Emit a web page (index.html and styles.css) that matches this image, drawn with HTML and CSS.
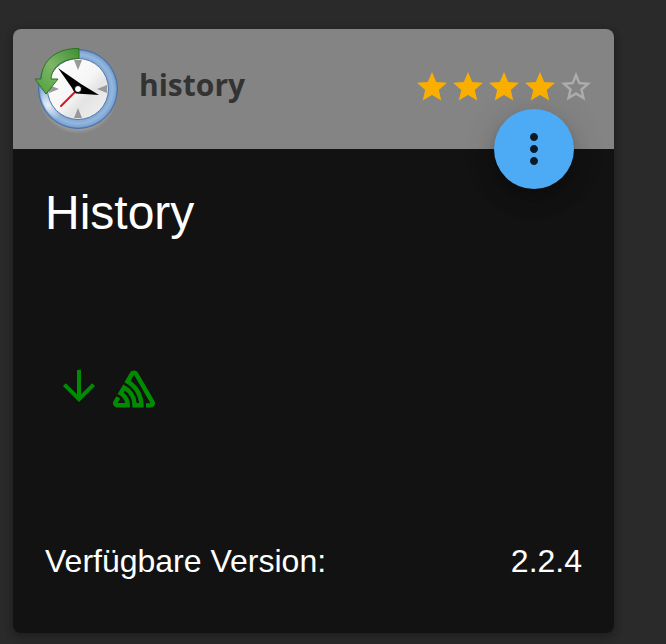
FILE: index.html
```html
<!DOCTYPE html>
<html lang="de">
<head>
<meta charset="utf-8">
<meta name="viewport" content="width=device-width, initial-scale=1">
<title>History</title>
<link rel="stylesheet" href="styles.css">
</head>
<body>
<article class="card">
  <header class="card-header">
    <svg class="logo" viewBox="0 0 92 92" aria-hidden="true">
      <defs>
        <radialGradient id="ring" cx="47" cy="46" r="40" gradientUnits="userSpaceOnUse">
          <stop offset=".76" stop-color="#7fa6d2"/>
          <stop offset=".86" stop-color="#94b7de"/>
          <stop offset=".94" stop-color="#7fa5d2"/>
          <stop offset="1" stop-color="#5078b0"/>
        </radialGradient>
        <radialGradient id="shine" cx="17" cy="62" r="17" gradientUnits="userSpaceOnUse">
          <stop offset="0" stop-color="#fff" stop-opacity=".8"/>
          <stop offset="1" stop-color="#fff" stop-opacity="0"/>
        </radialGradient>
        <linearGradient id="face" x1="0" y1="0" x2="1" y2="1">
          <stop offset="0" stop-color="#fff"/>
          <stop offset=".5" stop-color="#f6f6f6"/>
          <stop offset=".65" stop-color="#e4e4e4"/>
          <stop offset="1" stop-color="#f2f2f2"/>
        </linearGradient>
        <linearGradient id="arrow" x1="1" y1="0" x2="0" y2="1">
          <stop offset="0" stop-color="#3f8f33"/>
          <stop offset=".5" stop-color="#7db667"/>
          <stop offset="1" stop-color="#4d9e36"/>
        </linearGradient>
        <radialGradient id="glow">
          <stop offset=".84" stop-color="#a4a4a4"/>
          <stop offset="1" stop-color="#a4a4a4" stop-opacity="0"/>
        </radialGradient>
      </defs>
      <ellipse cx="47" cy="50" rx="40" ry="41" fill="url(#glow)"/>
      <circle cx="47" cy="46" r="39.500" fill="url(#ring)" stroke="#476fa8"/>
      <circle cx="47" cy="46" r="38" fill="url(#shine)"/>
      <circle cx="47" cy="46" r="30.500" fill="url(#face)" stroke="#5577a8"/>
      <path fill="#999" d="M43 17h8l-4 10zM43 75h8l-4-10zM18 42v8l10-4zM76 42v8l-10-4z"/>
      <path d="M47 46 30 63" stroke="#d9141c" stroke-width="2" stroke-linecap="round"/>
      <path d="M27 25 50 41 68 52 45 50.500Q42 48 41 45z" fill="#000"/>
      <circle cx="47" cy="46" r="3.500" fill="#fff" stroke="#000"/>
      <path d="M48 5.500v10C33 15.500 21 23 20 36h7L15 51 4 36h6C11 16 27 5 48 5.500z" fill="url(#arrow)" stroke="#2c721f" stroke-linejoin="round"/>
    </svg>
    <span class="name">history</span>
    <div class="rating" role="img" aria-label="4 von 5 Sternen">
      <svg class="star" viewBox="0 0 24 24"><path d="M12 17.270 18.180 21l-1.640-7.030L22 9.240l-7.190-.610L12 2 9.190 8.630 2 9.240l5.460 4.730L5.820 21z"/></svg>
      <svg class="star" viewBox="0 0 24 24"><path d="M12 17.270 18.180 21l-1.640-7.030L22 9.240l-7.190-.610L12 2 9.190 8.630 2 9.240l5.460 4.730L5.820 21z"/></svg>
      <svg class="star" viewBox="0 0 24 24"><path d="M12 17.270 18.180 21l-1.640-7.030L22 9.240l-7.190-.610L12 2 9.190 8.630 2 9.240l5.460 4.730L5.820 21z"/></svg>
      <svg class="star" viewBox="0 0 24 24"><path d="M12 17.270 18.180 21l-1.640-7.030L22 9.240l-7.190-.610L12 2 9.190 8.630 2 9.240l5.460 4.730L5.820 21z"/></svg>
      <svg class="star star-empty" viewBox="0 0 24 24"><path d="m22 9.240-7.190-.62L12 2 9.190 8.630 2 9.240l5.460 4.730L5.820 21 12 17.270 18.180 21l-1.630-7.030L22 9.240zM12 15.400l-3.760 2.270 1-4.280-3.320-2.880 4.380-.38L12 6.100l1.710 4.040 4.380.38-3.320 2.880 1 4.280L12 15.400z"/></svg>
    </div>
    <button class="menu-button" type="button" aria-label="Menü">
      <svg class="icon" viewBox="0 0 24 24"><path d="M12 8c1.100 0 2-.9 2-2s-.9-2-2-2-2 .9-2 2 .9 2 2 2zm0 2c-1.100 0-2 .9-2 2s.9 2 2 2 2-.9 2-2-.9-2-2-2zm0 6c-1.100 0-2 .9-2 2s.9 2 2 2 2-.9 2-2-.9-2-2-2z"/></svg>
    </button>
  </header>
  <div class="card-body">
    <h1 class="title">History</h1>
    <div class="status">
      <svg class="icon" viewBox="0 0 24 24" aria-hidden="true"><path d="m20 12-1.410-1.410L13 16.170V4h-2v12.170l-5.580-5.590L4 12l8 8 8-8z"/></svg>
      <svg class="sentry" viewBox="-.4 -.4 24.8 24.8" aria-hidden="true"><path d="M13.910 2.505c-.873-1.448-2.972-1.448-3.844 0L6.904 7.920a15.478 15.478 0 0 1 8.530 12.811h-2.221A13.301 13.301 0 0 0 5.784 9.814l-2.926 5.060a7.650 7.650 0 0 1 4.435 5.848H2.194a.365.365 0 0 1-.298-.534l1.413-2.402a5.160 5.160 0 0 0-1.614-.913L.296 19.275a2.182 2.182 0 0 0 .812 2.999 2.240 2.240 0 0 0 1.086.288h6.983a9.322 9.322 0 0 0-3.845-8.318l1.110-1.922a11.470 11.470 0 0 1 4.950 10.240h5.915a17.242 17.242 0 0 0-7.885-15.280l2.244-3.845a.37.37 0 0 1 .504-.13c.255.14 9.750 16.708 9.928 16.900a.365.365 0 0 1-.327.543h-2.287c.029.612.029 1.223 0 1.831h2.297a2.206 2.206 0 0 0 1.922-3.310z"/></svg>
    </div>
    <div class="version">
      <span>Verfügbare Version:</span>
      <span>2.2.4</span>
    </div>
  </div>
</article>
</body>
</html>
```
FILE: styles.css
```css
* {
  box-sizing: border-box;
}

body {
  margin: 0;
  padding: 29px 52px 11px 13px;
  background: #2a2a2a;
  color: #fff;
  font-family: "Liberation Sans", Arial, sans-serif;
}

.card {
  border-radius: 8px;
  background: #121212;
  box-shadow: 0 4px 8px rgba(0, 0, 0, .2), 0 2px 10px rgba(0, 0, 0, .16);
}

.card-header {
  position: relative;
  display: flex;
  align-items: center;
  height: 120px;
  padding: 0 20px 0 18px;
  border-radius: 8px 8px 0 0;
  background: #848484;
}

.logo {
  width: 92px;
  height: 92px;
}

.name {
  margin-left: 16px;
  padding-bottom: 8px;
  color: #333;
  font: 700 30px/40px "Open Sans", "Segoe UI", sans-serif;
}

.rating {
  display: flex;
  margin-left: auto;
  padding-bottom: 4px;
}

.star {
  width: 36px;
  height: 36px;
  fill: #faaf00;
}

.star-empty {
  fill: #adadad;
}

.menu-button {
  position: absolute;
  right: 40px;
  bottom: -40px;
  display: grid;
  place-items: center;
  width: 80px;
  height: 80px;
  padding: 0;
  border: 0;
  border-radius: 50%;
  background: #4dabf5;
  color: #0b1a26;
  box-shadow: 0 6px 10px -2px rgba(0, 0, 0, .2), 0 12px 20px rgba(0, 0, 0, .14), 0 2px 36px rgba(0, 0, 0, .12);
}

.icon {
  width: 48px;
  height: 48px;
  fill: currentColor;
}

.card-body {
  padding: 32px 32px 52px;
}

.title {
  margin: 0;
  font-size: 48px;
  font-weight: 400;
  line-height: 64px;
}

.status {
  display: flex;
  align-items: flex-end;
  gap: 10px;
  margin: 117px 0 131px;
  padding-left: 10px;
  color: #008c00;
}

.sentry {
  width: 42px;
  height: 42px;
  fill: currentColor;
  stroke: currentColor;
  stroke-width: .8;
}

.version {
  display: flex;
  justify-content: space-between;
  font-size: 32px;
  line-height: 40px;
}
```
